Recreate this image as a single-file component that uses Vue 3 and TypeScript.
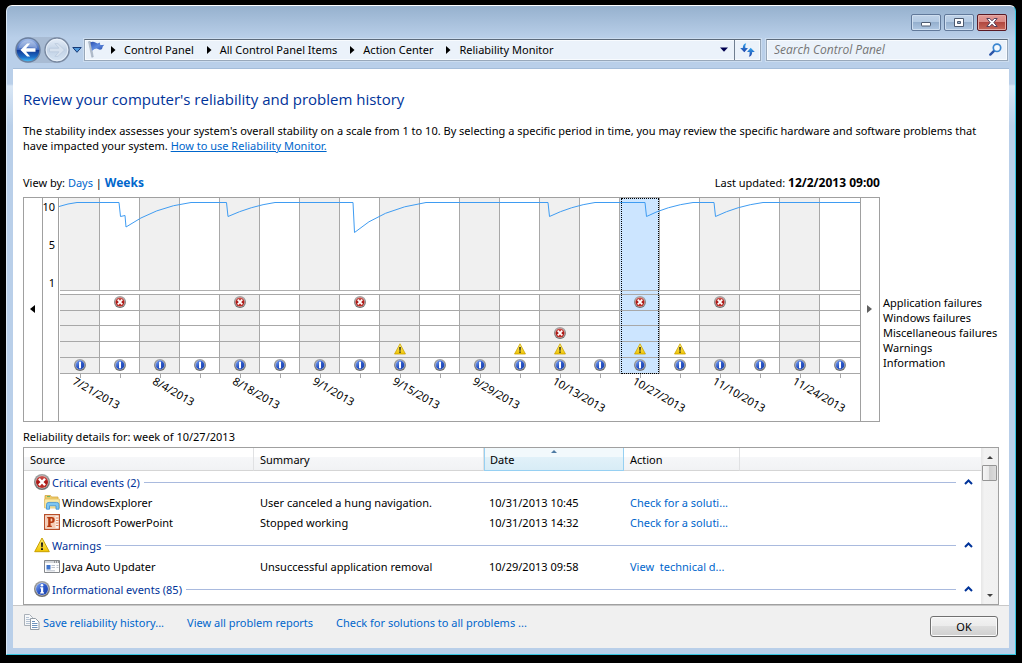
<script setup lang="ts">
import { ref } from 'vue'

type Kind = 'error' | 'warning' | 'info'

interface Week {
  date: string
  labelled: boolean
  rows: (Kind | null)[]
}

interface EventItem {
  icon: string
  source: string
  summary: string
  date: string
  action: string
}

interface EventGroup {
  icon: Kind
  title: string
  items: EventItem[]
}

const crumbs = ['Control Panel', 'All Control Panel Items', 'Action Center', 'Reliability Monitor']

const dates = [
  '7/21/2013', '7/28/2013', '8/4/2013', '8/11/2013', '8/18/2013', '8/25/2013', '9/1/2013', '9/8/2013',
  '9/15/2013', '9/22/2013', '9/29/2013', '10/6/2013', '10/13/2013', '10/20/2013', '10/27/2013',
  '11/3/2013', '11/10/2013', '11/17/2013', '11/24/2013', '12/1/2013',
]
const appFailures = [1, 4, 7, 14, 16]
const miscFailures = [12]
const warnings = [8, 11, 12, 14, 15]

const weeks: Week[] = dates.map((date, i) => ({
  date,
  labelled: i % 2 === 0,
  rows: [
    appFailures.includes(i) ? 'error' : null,
    null,
    miscFailures.includes(i) ? 'error' : null,
    warnings.includes(i) ? 'warning' : null,
    'info',
  ],
}))

const selected = ref(14)
const legend = ['Application failures', 'Windows failures', 'Miscellaneous failures', 'Warnings', 'Information']

const groups: EventGroup[] = [
  {
    icon: 'error',
    title: 'Critical events (2)',
    items: [
      { icon: 'folder', source: 'WindowsExplorer', summary: 'User canceled a hung navigation.', date: '10/31/2013 10:45', action: 'Check for a soluti...' },
      { icon: 'ppt', source: 'Microsoft PowerPoint', summary: 'Stopped working', date: '10/31/2013 14:32', action: 'Check for a soluti...' },
    ],
  },
  {
    icon: 'warning',
    title: 'Warnings',
    items: [
      { icon: 'app', source: 'Java Auto Updater', summary: 'Unsuccessful application removal', date: '10/29/2013 09:58', action: 'View \u00a0technical d...' },
    ],
  },
  { icon: 'info', title: 'Informational events (85)', items: [] },
]
</script>

<template>
  <svg class="defs" aria-hidden="true">
    <defs>
      <linearGradient id="gRing" x1="0" y1="0" x2="0" y2="1">
        <stop offset="0" stop-color="#a4a4a4" /><stop offset="1" stop-color="#6c6c6c" />
      </linearGradient>
      <linearGradient id="gRed" x1="0" y1="0" x2="0" y2="1">
        <stop offset="0" stop-color="#cf5c56" /><stop offset="0.5" stop-color="#ab1512" /><stop offset="1" stop-color="#c03830" />
      </linearGradient>
      <linearGradient id="gBlue" x1="0" y1="0" x2="1" y2="1">
        <stop offset="0" stop-color="#86aaf0" /><stop offset="0.5" stop-color="#2a56c8" /><stop offset="1" stop-color="#1c42ac" />
      </linearGradient>
      <linearGradient id="gYellow" x1="0" y1="0" x2="0" y2="1">
        <stop offset="0" stop-color="#fff27a" /><stop offset="1" stop-color="#f0c400" />
      </linearGradient>
      <linearGradient id="gBack" x1="0" y1="0" x2="0" y2="1">
        <stop offset="0" stop-color="#a9c2ec" /><stop offset="0.48" stop-color="#3f68bd" />
        <stop offset="0.52" stop-color="#123a96" /><stop offset="0.8" stop-color="#1e6fc8" /><stop offset="1" stop-color="#4cc8fa" />
      </linearGradient>
      <linearGradient id="gForward" x1="0" y1="0" x2="0" y2="1">
        <stop offset="0" stop-color="#e6eef8" /><stop offset="0.5" stop-color="#c3d3e6" /><stop offset="1" stop-color="#d6e4f3" />
      </linearGradient>
      <linearGradient id="gFlag" x1="0" y1="0" x2="1" y2="1">
        <stop offset="0" stop-color="#2b50b0" /><stop offset="0.5" stop-color="#5f8be0" /><stop offset="1" stop-color="#2446a4" />
      </linearGradient>
      <linearGradient id="gArrow" x1="0" y1="0" x2="0" y2="1">
        <stop offset="0" stop-color="#35a6ee" /><stop offset="1" stop-color="#1d3fa8" />
      </linearGradient>
    </defs>
    <symbol id="i-error" viewBox="0 0 16 16">
      <circle cx="8" cy="8" r="8" fill="url(#gRing)" />
      <circle cx="8" cy="8" r="6.5" fill="#d8d0d0" />
      <circle cx="8" cy="8" r="6" fill="url(#gRed)" />
      <path d="M5 4.700l6 6.600M11 4.700l-6 6.600" stroke="#fff" stroke-width="2.400" />
    </symbol>
    <symbol id="i-info" viewBox="0 0 16 16">
      <circle cx="8" cy="8" r="8" fill="url(#gRing)" />
      <circle cx="8" cy="8" r="6.5" fill="#cdd6ea" />
      <circle cx="8" cy="8" r="6" fill="url(#gBlue)" />
      <circle cx="8" cy="4.300" r="1.300" fill="#fff" />
      <path d="M6.200 6.300h3v5h.8v1.200H6.200v-1.200H7V7.500h-.8z" fill="#fff" />
    </symbol>
    <symbol id="i-info-small" viewBox="0 0 12 12">
      <circle cx="6" cy="6" r="6" fill="url(#gRing)" />
      <circle cx="6" cy="6" r="4.700" fill="#b9c6e4" />
      <circle cx="6" cy="6" r="4.400" fill="url(#gBlue)" />
      <path d="M5 2.800h2v6.400H5z" fill="#fff" />
    </symbol>
    <symbol id="i-warning" viewBox="0 0 16 16">
      <path d="M8 1L15.300 14.700H.7z" fill="url(#gYellow)" stroke="#c9a000" stroke-width="1" stroke-linejoin="round" />
      <path d="M7 5.400h2L8.700 10.300H7.300zM7 11.300h2v1.800H7z" fill="#1a1a1a" />
    </symbol>
    <symbol id="i-folder" viewBox="0 0 16 16">
      <path d="M1 1.500h5.500l1 1.500H14v10.500H1z" fill="#f0cd6c" stroke="#d3a640" stroke-width=".8" />
      <path d="M3 2.600h3" stroke="#5db069" stroke-width="1" />
      <path d="M.6 5h14.800v9H.6z" fill="#fbe9a4" stroke="#dfba5c" stroke-width=".7" />
      <path d="M2.500 15.200V10.400q0-2 2.400-2h7.700q2.400 0 2.400 2v4.800h-3v-3.400H5.500v3.400z" fill="#7cc5f3" stroke="#3d8fd0" stroke-width=".8" />
    </symbol>
    <symbol id="i-ppt" viewBox="0 0 16 16">
      <path d="M.6.6h14.800v14.800H.6z" fill="#fdf3ec" stroke="#b8502a" stroke-width="1.200" />
      <path d="M12 4h2.500M12 6.500h2.500M12 9h2.500M12 11.500h2.500" stroke="#dc8b67" stroke-width="1" />
      <path d="M2 2h9.500v12H2z" fill="#f6cdb6" />
      <path d="M3.200 3h4.500q3 0 3 2.900T7.700 8.900H6.600v2.800h1.200v1.300H3.200v-1.300h1V4.300h-1zM6.600 4.500v2.900h.7q1.100 0 1.100-1.500t-1.100-1.400z" fill="#b53a10" fill-rule="evenodd" />
    </symbol>
    <symbol id="i-app" viewBox="0 0 16 16">
      <path d="M.5 2.500h15v12H.5z" fill="#fdfdfd" stroke="#85888c" />
      <path d="M1 3h14v2H1z" fill="#d3d6da" />
      <path d="M10 4h1M12 4h1M14 4h1" stroke="#555" stroke-width="1" />
      <path d="M2.500 7h4v4.500h-4z" fill="#3f74cc" />
      <path d="M7.500 7.500H11M7.500 9.500H11M2.500 12.800H11M12.500 7.500h2M12.500 9.500h2" stroke="#b4bcc8" stroke-width=".9" />
    </symbol>
  </svg>

  <div class="desktop">
    <div class="window">
      <header class="titlebar">
        <button class="cap" type="button" aria-label="Minimize">
          <svg width="12" height="11"><rect x="1.500" y="5.500" width="9" height="3.500" rx=".5" fill="#fff" stroke="#4c5a70" /></svg>
        </button>
        <button class="cap" type="button" aria-label="Maximize">
          <svg width="12" height="11"><path d="M1.500 1.500h9v8h-9zM4.500 4.500v2h3v-2z" fill="#fff" fill-rule="evenodd" stroke="#4c5a70" /></svg>
        </button>
        <button class="cap close" type="button" aria-label="Close">
          <svg width="14" height="11"><path d="M1.800 1.500h3L7 3.800l2.200-2.300h3L8.900 5.500l3.300 4h-3L7 7.200 4.800 9.500h-3l3.300-4z" fill="#fff" stroke="#54405a" /></svg>
        </button>
      </header>

      <nav class="navbar" aria-label="Address">
        <div class="travel">
          <button type="button" aria-label="Back">
            <svg width="26" height="26" viewBox="0 0 26 26">
              <circle cx="13" cy="13" r="12" fill="url(#gBack)" stroke="#6a7f9f" stroke-width="1.400" />
              <path d="M3.500 11.500a9.600 9.600 0 0119 0q-9.500-3-19 0z" fill="#fff" opacity=".25" />
              <path d="M5.500 13l6.600-6.400h3l-4 4.600h9.400v3.600h-9.400l4 4.600h-3z" fill="#fff" />
            </svg>
          </button>
          <button type="button" aria-label="Forward">
            <svg width="26" height="26" viewBox="0 0 26 26">
              <circle cx="13" cy="13" r="12" fill="url(#gForward)" stroke="#7888a0" stroke-width="1.400" />
              <circle cx="13" cy="13" r="10.800" fill="none" stroke="#eef4fb" stroke-width=".8" />
              <path d="M20.500 13l-6.600-6.400h-3l4 4.600H5.500v3.600h9.400l-4 4.600h3z" fill="#d6e1ee" stroke="#b1c3d9" stroke-width=".6" />
            </svg>
          </button>
        </div>
        <button class="history" type="button" aria-label="Recent pages">
          <svg width="10" height="6"><path d="M.8.5h8.400L5 5.300z" fill="#4f9ade" stroke="#173a77" /></svg>
        </button>
        <div class="address">
          <svg class="flag" width="17" height="17" viewBox="0 0 17 17">
            <path d="M.5.700l1.700-.4L5.300 15.800l-1.500.5z" fill="#b9c3d0" stroke="#8291a5" stroke-width=".4" />
            <path d="M2.400 1.300q2.900-1.300 5 .3t4.400 0l.5 2.400q2.100.2 4 -.3-1.900 1.500-2.300 4.300-2 1.300-4 0t-6 1.700z" fill="url(#gFlag)" />
          </svg>
          <template v-for="crumb in crumbs" :key="crumb">
            <svg class="sep" width="5" height="8"><path d="M0 0l4.500 4L0 8z" fill="#000" /></svg>
            <a href="#" class="crumb">{{ crumb }}</a>
          </template>
          <button class="drop" type="button" aria-label="Previous locations">
            <svg width="8" height="5"><path d="M0 .5h8L4 4.700z" fill="#000050" /></svg>
          </button>
          <button class="refresh" type="button" aria-label="Refresh">
            <svg width="15" height="14" viewBox="0 0 15 14">
              <path d="M6.200.2Q2.800.8 2.800 5H.2l4.100 4.300L8 5H5.400Q5 2.400 6.200.2z" fill="url(#gArrow)" />
              <path d="M8.800 13.800q3.400-.6 3.400-4.800h2.600L10.700 4.700 7 9h2.600q.3 2.800-.8 4.800z" fill="url(#gArrow)" />
            </svg>
          </button>
        </div>
        <div class="search">
          <input type="text" placeholder="Search Control Panel" aria-label="Search Control Panel">
          <svg width="13" height="13" viewBox="0 0 13 13">
            <path d="M5.300 7.700L1.300 11.600" stroke="#2c55a8" stroke-width="2.400" stroke-linecap="round" />
            <circle cx="8" cy="4.800" r="3.700" fill="#f4f9fe" stroke="#3a86d0" stroke-width="1.700" />
          </svg>
        </div>
      </nav>

      <main class="content">
        <h1>Review your computer's reliability and problem history</h1>
        <p class="intro">
          The stability index assesses your system's overall stability on a scale from 1 to 10. By selecting a specific period in time, you may review the specific hardware and software problems that have impacted your system. <a href="#" class="underlined">How to use Reliability Monitor.</a>
        </p>

        <div class="viewbar">
          <span>View by: <a href="#">Days</a> | <a href="#"><b>Weeks</b></a></span>
          <span>Last updated: <b>12/2/2013 09:00</b></span>
        </div>

        <section class="chart-area">
          <div class="chart">
            <button class="pager left" type="button" aria-label="Earlier weeks">
              <svg width="5" height="8"><path d="M5 0L0 4l5 4z" fill="#000" /></svg>
            </button>
            <div class="axis"><span>10</span><span>5</span><span>1</span></div>
            <div class="plot">
              <button
                v-for="(week, i) in weeks"
                :key="week.date"
                type="button"
                class="week"
                :class="{ selected: i === selected }"
                :aria-label="'Week of ' + week.date"
                @click="selected = i"
              >
                <span class="graph"></span>
                <span class="gap"></span>
                <span class="cells">
                  <span v-for="(kind, r) in week.rows" :key="r" class="cell">
                    <svg v-if="kind" width="12" height="12"><use :href="kind === 'info' ? '#i-info-small' : '#i-' + kind" /></svg>
                  </span>
                </span>
                <span class="tick"></span>
                <span v-if="week.labelled" class="date">{{ week.date }}</span>
              </button>
              <svg class="line" viewBox="0 0 801 92" preserveAspectRatio="none" aria-hidden="true">
                <path d="M0 8.500Q9 5.500 18 4.500H60L61.500 18.500 66 17.500 67 29Q96 9 132 4.500H167.500L169 18.500Q192 8 216 4.500H294L295.500 34.500Q322 11 367 4.500H489L490.500 18.500Q512 8 536 4.500H586L587.500 18.500Q608 8 634 4.500H655L656.500 18.500Q678 8 704 4.500H801" />
              </svg>
            </div>
            <button class="pager right" type="button" aria-label="Later weeks">
              <svg width="5" height="8"><path d="M0 0l5 4-5 4z" fill="#606060" /></svg>
            </button>
          </div>
          <ul class="legend">
            <li v-for="name in legend" :key="name">{{ name }}</li>
          </ul>
        </section>

        <h2>Reliability details for: week of 10/27/2013</h2>

        <section class="list">
          <table>
            <colgroup>
              <col class="c-source"><col class="c-summary"><col class="c-date"><col class="c-action"><col>
            </colgroup>
            <thead>
              <tr>
                <th>Source</th>
                <th>Summary</th>
                <th class="sorted" aria-sort="ascending">
                  Date
                  <svg width="8" height="4"><path d="M1 4l3-3 3 3z" fill="#4e7ba3" /></svg>
                </th>
                <th>Action</th>
                <th class="last"></th>
              </tr>
            </thead>
            <tbody v-for="group in groups" :key="group.title">
              <tr class="group">
                <td colspan="5">
                  <div class="group-head">
                    <svg width="16" height="16"><use :href="'#i-' + group.icon" /></svg>
                    <span>{{ group.title }}</span>
                    <i></i>
                    <button type="button" :aria-label="'Collapse ' + group.title">
                      <svg width="9" height="6"><path d="M1 5l3.500-3.500L8 5" fill="none" stroke="#003399" stroke-width="2" /></svg>
                    </button>
                  </div>
                </td>
              </tr>
              <tr v-for="item in group.items" :key="item.source" class="item">
                <td>
                  <div class="source"><svg width="16" height="16"><use :href="'#i-' + item.icon" /></svg>{{ item.source }}</div>
                </td>
                <td>{{ item.summary }}</td>
                <td class="when">{{ item.date }}</td>
                <td><a href="#">{{ item.action }}</a></td>
                <td></td>
              </tr>
            </tbody>
          </table>
          <div class="scrollbar">
            <button type="button" aria-label="Scroll up"><svg width="8" height="4"><path d="M1 4l3-3 3 3z" fill="#404040" /></svg></button>
            <div class="thumb"></div>
            <button class="down" type="button" aria-label="Scroll down"><svg width="8" height="4"><path d="M1 0h6L4 3z" fill="#404040" /></svg></button>
          </div>
        </section>
      </main>

      <footer class="footer">
        <svg class="copy" width="16" height="16" viewBox="0 0 16 16">
          <path d="M.5.5h5l3 3v8h-8z" fill="#f6f8fa" stroke="#a9b0b8" />
          <path d="M2 3.500h3M2 5.500h4M2 7.500h4M2 9.500h4" stroke="#b4c2d2" />
          <path d="M6.500 4.500h5l3.500 3.500v7.500H6.500z" fill="#fff" stroke="#949ca5" />
          <path d="M8 7.500h3M8 9.500h5.500M8 11.500h5.500M8 13.500h5.500" stroke="#6f93bd" />
        </svg>
        <a href="#">Save reliability history...</a>
        <a href="#">View all problem reports</a>
        <a href="#">Check for solutions to all problems ...</a>
        <button class="ok" type="button">OK</button>
      </footer>
    </div>
  </div>
</template>

<style>
html,
body {
  margin: 0;
  background: #000;
}
</style>

<style scoped>
* {
  box-sizing: border-box;
}
.defs {
  position: absolute;
  width: 0;
  height: 0;
}
.desktop {
  min-height: 100vh;
  padding: 5px 6px 8px;
  display: flex;
  background: #000;
  color: #000;
  font: 11px/15px 'Noto Sans', 'Open Sans', sans-serif;
}
svg {
  display: block;
  flex: none;
}
button {
  font: inherit;
  color: inherit;
  padding: 0;
  margin: 0;
  border: 0;
  background: none;
}
a {
  color: #0066cc;
  text-decoration: none;
}
.window {
  flex: 1;
  min-width: 0;
  display: flex;
  flex-direction: column;
  padding: 0 6px 6px;
  border: 1px solid #35c5e0;
  border-top-color: #fff;
  border-left-color: #dbe8f5;
  border-radius: 6px 6px 0 0;
  background: linear-gradient(#96b1ce 0, #b9cfe9 32px, #b9cfe9 78px, #d8e6f5 80px, #b9cfe9 120px);
}
.titlebar {
  display: flex;
  justify-content: flex-end;
  gap: 3px;
  height: 33px;
  padding: 8px 2px 0 0;
}
.cap {
  width: 30px;
  height: 17px;
  display: flex;
  align-items: center;
  justify-content: center;
  border: 1px solid #61799a;
  border-radius: 2px;
  background: linear-gradient(#c0d3e9 0, #b2c9e2 50%, #95b0ce 50%, #b0c8e3 100%);
  box-shadow: inset 0 0 0 1px #cfdff0;
}
.cap.close {
  border-color: #5a1a24;
  background: linear-gradient(#e29b96 0, #d98782 50%, #b14840 50%, #c8695a 100%);
  box-shadow: inset 0 0 0 1px #e5aaa5;
}
.navbar {
  display: flex;
  align-items: center;
  height: 30px;
  padding-bottom: 8px;
  border-bottom: 1px solid #a3bcd9;
}
.travel {
  display: flex;
  gap: 3px;
  margin-left: 2px;
  border-radius: 14px;
  background: #a8bbd3;
}
.history {
  width: 14px;
  display: flex;
  justify-content: center;
}
.address,
.search {
  display: flex;
  align-items: center;
  height: 22px;
  border: 1px solid #98a8ba;
  border-top-color: #5c6a7b;
  background: #ebf2fa;
  box-shadow: inset 0 0 0 1px #f8fbfe, 0 0 0 1px #cbdcef;
}
.address {
  flex: 1;
  padding-left: 3px;
}
.flag {
  margin-right: 6px;
}
.sep {
  margin-right: 8px;
}
.crumb {
  color: #000;
  margin-right: 13px;
  white-space: nowrap;
}
.drop {
  width: 20px;
  height: 20px;
  margin-left: auto;
  display: flex;
  align-items: center;
  justify-content: center;
}
.refresh {
  width: 26px;
  height: 20px;
  display: flex;
  align-items: center;
  justify-content: center;
  border-left: 1px solid #707e90;
}
.search {
  flex: 0 0 242px;
  margin: 0 1px 0 5px;
  padding: 0 5px 0 7px;
}
.search input {
  flex: 1;
  min-width: 0;
  padding: 0;
  border: 0;
  outline: 0;
  background: none;
  font: italic 12px/18px 'Open Sans', 'Noto Sans', sans-serif;
}
.search input::placeholder {
  color: #757575;
  opacity: 1;
}
.content {
  flex: 1;
  display: flex;
  flex-direction: column;
  padding: 20px 10px 0;
  background: #fff;
}
h1 {
  margin: 0;
  font: 400 15px/20px 'Open Sans', 'Noto Sans', sans-serif;
  color: #003399;
}
.intro {
  margin: 14px 0 0;
}
.underlined {
  text-decoration: underline;
}
.viewbar {
  display: flex;
  justify-content: space-between;
  height: 15px;
  margin-top: 22px;
  padding-right: 119px;
}
.viewbar b {
  font-size: 12px;
}
.chart-area {
  display: flex;
  margin-top: 7px;
}
.chart {
  flex: 1;
  display: flex;
  height: 225px;
  border: 1px solid #a0a0a0;
}
.pager {
  width: 19px;
  display: flex;
  align-items: center;
  justify-content: center;
  padding: 0 2px 2px 0;
}
.pager.left {
  border-right: 1px solid #a0a0a0;
}
.pager.right {
  border-left: 1px solid #a0a0a0;
}
.axis {
  width: 16px;
  height: 100%;
  padding: 1px 3px 0 0;
  display: flex;
  flex-direction: column;
  align-items: flex-end;
  gap: 23px;
  border-right: 1px solid #a0a0a0;
}
.plot {
  position: relative;
  flex: 1;
  display: flex;
  padding-left: 1px;
}
.week {
  position: relative;
  flex: 1;
  min-width: 0;
  display: flex;
  flex-direction: column;
  justify-content: flex-start;
  text-align: left;
}
.graph {
  height: 93px;
  border-right: 1px solid #a8a8a8;
  border-bottom: 1px solid #b0b0b0;
}
.gap {
  height: 3px;
}
.cells {
  display: grid;
  grid-template-rows: 16px 15px 16px 16px 16px;
  border-top: 1px solid #a8a8a8;
  border-right: 1px solid #a8a8a8;
}
.cell {
  display: flex;
  align-items: flex-start;
  justify-content: center;
  padding-top: 1px;
  border-bottom: 1px solid #a8a8a8;
}
.week:nth-child(odd) .graph,
.week:nth-child(odd) .cells {
  background: #f0f0f0;
}
.week:nth-last-child(2) .graph,
.week:nth-last-child(2) .cells {
  border-right: 0;
}
.week.selected .graph,
.week.selected .gap,
.week.selected .cells {
  background: #cce5ff;
}
.week.selected::after {
  content: '';
  position: absolute;
  inset: 0 1px auto 1px;
  height: 174px;
  border: 1px dotted #000;
}
.tick {
  width: 1px;
  height: 4px;
  align-self: center;
  background: #a8a8a8;
}
.date {
  position: absolute;
  top: 174px;
  left: 14px;
  white-space: nowrap;
  transform: rotate(30deg);
  transform-origin: 0 50%;
}
.line {
  position: absolute;
  top: 0;
  left: 0;
  width: 100%;
  height: 92px;
  pointer-events: none;
}
.line path {
  fill: none;
  stroke: #3f9cf2;
  stroke-width: 1;
  vector-effect: non-scaling-stroke;
}
.legend {
  width: 119px;
  margin: 98px 0 0;
  padding: 0 0 0 3px;
  list-style: none;
  white-space: nowrap;
}
h2 {
  margin: 7px 0 2px;
  font-size: 11px;
  line-height: 16px;
  font-weight: 400;
}
.list {
  flex: 1;
  display: flex;
  border: 1px solid #a0a0a0;
}
table {
  flex: 1;
  align-self: flex-start;
  table-layout: fixed;
  border-collapse: separate;
  border-spacing: 0;
}
.c-source,
.c-summary {
  width: 230px;
}
.c-date {
  width: 140px;
}
.c-action {
  width: 116px;
}
th {
  position: relative;
  height: 23px;
  padding: 0 6px;
  font-weight: 400;
  text-align: left;
  border-right: 1px solid #e0e1e3;
  border-bottom: 1px solid #d5d5d5;
  background: linear-gradient(#fff 0, #fff 40%, #f6f7f9 40%, #f1f2f4 100%);
}
th.last {
  border-right: 0;
}
th.sorted {
  padding-left: 5px;
  border: 1px solid #96d0f2;
  border-top: 0;
  background: linear-gradient(#f2f9fc 0, #f2f9fc 40%, #e1f1f9 40%, #d8ecf6 100%);
}
th.sorted svg {
  position: absolute;
  top: 1px;
  left: 50%;
  margin-left: -4px;
}
td {
  padding: 0 6px;
  white-space: nowrap;
}
.group td {
  height: 22px;
  padding: 0 8px 0 10px;
}
tbody + tbody .group td {
  height: 24px;
}
.group-head {
  display: flex;
  align-items: center;
  color: #003399;
}
.group-head span {
  margin: 0 4px 0 2px;
}
.group-head i {
  flex: 1;
  height: 1px;
  margin-right: 8px;
  background: #a9bade;
}
.item td {
  height: 20px;
  padding-bottom: 2px;
}
.item .when {
  padding-left: 5px;
}
.source {
  display: flex;
  align-items: center;
  gap: 2px;
  padding-left: 14px;
}
.scrollbar {
  width: 17px;
  display: flex;
  flex-direction: column;
  background: linear-gradient(90deg, #e6e6e6, #f2f2f2 20%, #f0f0f0);
}
.scrollbar button {
  height: 17px;
  display: flex;
  align-items: center;
  justify-content: center;
}
.scrollbar .down {
  margin-top: auto;
}
.thumb {
  width: 15px;
  height: 16px;
  margin-left: 1px;
  border: 1px solid #959595;
  border-radius: 1px;
  background: linear-gradient(90deg, #f5f5f5 0, #e8e8e8 50%, #cfcfcf 50%, #dcdcdc 100%);
}
.footer {
  display: flex;
  align-items: center;
  height: 43px;
  padding: 0 11px 10px;
  border-top: 1px solid #c8c8c8;
  background: #f0f0f0;
}
.footer a {
  margin-right: 23px;
  white-space: nowrap;
}
.copy {
  margin-right: 3px;
}
.ok {
  width: 68px;
  height: 21px;
  margin: 8px 0 0 auto;
  border: 1px solid #707070;
  border-radius: 3px;
  background: linear-gradient(#f3f3f3 0, #ebebeb 50%, #dddddd 50%, #cfcfcf 100%);
  box-shadow: inset 0 0 0 1px #fafafa;
}
</style>
